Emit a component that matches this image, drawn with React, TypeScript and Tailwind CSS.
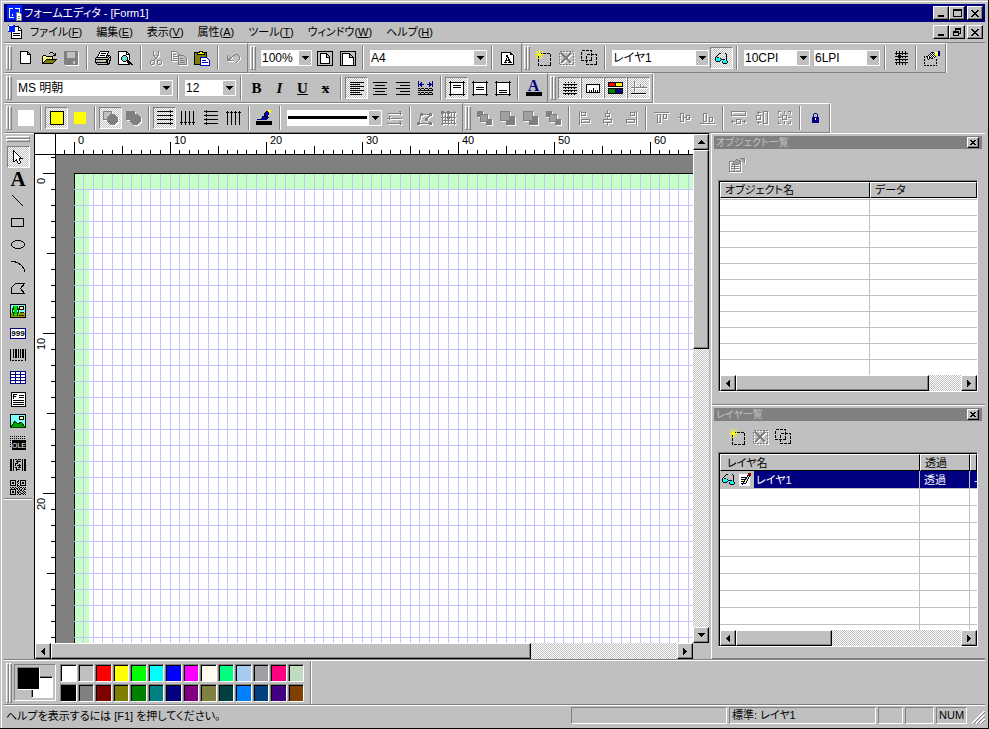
import { ReactNode } from 'react';
import clsx from 'clsx';

const COLORS: Record<string, string> = {
    '#': '#000000',
    g: '#808080',
    s: '#c0c0c0',
    w: '#ffffff',
    y: '#ffff00',
    o: '#808000',
    c: '#00ffff',
    n: '#000080',
};

// Small bitmap: one character per pixel, '.' is transparent
const Px = ({ rows }: { rows: string[] }) => (
    <svg width={rows[0].length} height={rows.length} shapeRendering="crispEdges" className="shrink-0">
        {rows.flatMap((row, y) =>
            row.split('').map((c, x) => COLORS[c] && <rect key={`${x}-${y}`} x={x} y={y} width={1} height={1} fill={COLORS[c]} />)
        )}
    </svg>
);

const Svg = ({ children, off, w = 17, h = 17 }: { children: ReactNode, off?: boolean, w?: number, h?: number }) => (
    <svg
        width={w}
        height={h}
        shapeRendering="crispEdges"
        fill="none"
        stroke={off ? '#808080' : '#000'}
        className={clsx('shrink-0', off && 'drop-shadow-[1px_1px_0_#fff]')}
    >
        {children}
    </svg>
);

const raised = 'border border-t-white border-l-white border-r-black border-b-black bg-[#c0c0c0] shadow-[inset_-1px_-1px_0_#808080]';
const sunken = 'border border-t-[#808080] border-l-[#808080] border-r-white border-b-white';
const dither = 'bg-[repeating-conic-gradient(#fff_0_25%,#c0c0c0_0_50%)] bg-[length:2px_2px]';
const ridge = 'border border-t-white border-l-white border-r-[#808080] border-b-[#808080]';

const Grip = ({ height = 'h-6' }: { height?: string }) => (
    <div className={clsx('mr-[2px] flex shrink-0', height)}>
        <span className={clsx('w-[3px]', ridge)} />
        <span className={clsx('w-[3px]', ridge)} />
    </div>
);

const Band = ({ children }: { children: ReactNode }) => (
    <div className="flex h-[30px] shrink-0 items-center border border-t-white border-l-[#c0c0c0] border-r-[#808080] border-b-[#808080] pl-px pr-[2px] shadow-[1px_0_0_#fff]">
        <Grip />
        {children}
    </div>
);

const Sep = () => (
    <div className="flex h-6 w-2 shrink-0 justify-center">
        <span className="w-[2px] border-l border-l-[#808080] border-r border-r-white" />
    </div>
);

const Tool = ({ label, on, children }: { label: string, on?: boolean, children: ReactNode }) => (
    <button
        type="button"
        aria-label={label}
        className={clsx('flex h-[22px] w-[23px] shrink-0 items-center justify-center', on && sunken, on && dither)}
    >
        {children}
    </button>
);

const Combo = ({ label, value, width, children }: { label: string, value: string, width: string, children?: ReactNode }) => (
    <div className={clsx('relative ml-[3px] mr-px h-4 shrink-0 bg-white', width)}>
        <select
            aria-label={label}
            className="block h-4 w-full appearance-none bg-white pl-px pr-4 text-[12px] leading-4 outline-none"
            defaultValue={value}
        >
            <option value={value}>{value}</option>
        </select>
        {children}
        <span className="pointer-events-none absolute right-px top-px flex h-[14px] w-3 items-center justify-center bg-[#c0c0c0]">
            <Px rows={['#######', '.#####.', '..###..', '...#...']} />
        </span>
    </div>
);

/* ---- icons ---- */

const AppIcon = () => (
    <Svg w={16} h={16}>
        <rect width="15" height="15" fill="#0020ff" stroke="none" />
        <path d="M2.5 12V3.5h3M8 3.5h4.5v3M2 12.5h5M5.5 9v2" stroke="#fff" />
        <path d="M9.5 7.5h3l2 2v6h-5z" fill="#fff" stroke="#808080" />
        <path d="M11 11.5h2M11 13.5h2" stroke="#808080" />
    </Svg>
);

const DocIcon = () => (
    <Svg w={16} h={16}>
        <path d="M4.5 2.5h7l3 3v9h-10z" fill="#fff" />
        <path d="M6 9.5h7M6 11.5h7M11.5 3v3h3" />
        <rect x="1" y="1" width="7" height="7" fill="#0020ff" stroke="none" />
        <path d="M1.5 2v5M2 1.5h4" stroke="#fff" />
    </Svg>
);

const NewIcon = () => (
    <Svg w={12} h={14}><path d="M.5.5h7l3 3v9H.5zM7.5.5v3h3" fill="#fff" /></Svg>
);

const OpenIcon = () => (
    <Px rows={[
        '.........###....',
        '........#...#.#.',
        '.............##.',
        '..###.......###.',
        '.#ywy#######....',
        '.#wywywywyw#....',
        '.#ywywywywy#....',
        '.#wyw###########',
        '.#yw#ooooooooo#.',
        '.#w#ooooooooo#..',
        '.##ooooooooo#...',
        '.###########....',
    ]} />
);

const SaveIcon = () => (
    <Svg off w={15} h={15}>
        <path d="M.5.5h13v13h-12l-1-1z" fill="#808080" />
        <path d="M3 1h8v6H3zM9 10h2v3H9z" fill="#c0c0c0" stroke="none" />
    </Svg>
);

const PrintIcon = () => (
    <Px rows={[
        '.....#########..',
        '....#wwwwwwww#..',
        '....#w#####w#...',
        '...#wwwwwwww#...',
        '...#w#####w####.',
        '..#wwwwwwww#s#s#',
        '.############s##',
        '#ssssssssssss#s#',
        '##############s#',
        '#sssssssyys##s##',
        '#ssssssssss##s#.',
        '#############s#.',
        '.#ssssssssss###.',
        '..############..',
    ]} />
);

const PreviewIcon = () => (
    <Px rows={[
        '#########.......',
        '#wwwwwww##......',
        '#wwwwwww#w#.....',
        '#wwwwwww####....',
        '#wwww###www#....',
        '#www#scs#ww#....',
        '#ww#scscs#w#....',
        '#ww#cscsc#w#....',
        '#ww#scscs#w#....',
        '#www#scs###.....',
        '#wwww###s###....',
        '#wwwwwwww####...',
        '#wwwwwwwww####..',
        '############.##.',
    ]} />
);

const CutIcon = () => (
    <Svg off w={13} h={15}>
        <path d="M3.5 0v4l5 6M8.5 0v4l-5 6" />
        <circle cx="2.5" cy="11.5" r="2" /><circle cx="9.5" cy="11.5" r="2" />
    </Svg>
);

const CopyIcon = () => (
    <Svg off w={17} h={15}>
        <path d="M.5.5h5l3 3v6h-8zM2 3.5h3M2 5.5h5M2 7.5h5" />
        <path d="M7.5 4.5h5l3 3v6h-8z" fill="#c0c0c0" />
        <path d="M9 7.5h3M9 9.5h5M9 11.5h5" />
    </Svg>
);

const PasteIcon = () => (
    <Svg w={17} h={15}>
        <path d="M.5 1.5h12v12H.5z" fill="#808000" />
        <path d="M3.5 3.5v-2h2v-1h3v1h2v2z" fill="#ffff00" />
        <path d="M6.5 6.5h6l3 3v5h-9z" fill="#fff" stroke="#0000c0" />
        <path d="M8 9.5h4M8 11.5h6" stroke="#0000c0" />
    </Svg>
);

const UndoIcon = () => (
    <Px rows={[
        '........ggg...',
        'g.....gg...g..',
        'g....g......g.',
        'g..ggw......gw',
        'g.gg.w......gw',
        'ggg.w.......gw',
        'gggggg.....gw.',
        '.wwwwww...gw..',
        '.........gw...',
    ]} />
);

const PageFit = ({ wide }: { wide?: boolean }) => (
    <Svg w={16} h={15}>
        <path d="M.5.5h15v14H.5z" fill="#c0c0c0" />
        <path d={wide ? 'M2.5 14V2.5h7l4 4V14M9.5 3v3.5h4' : 'M3.5 2.5h6l3 3v7h-9zM9.5 3v3h3'} fill="#fff" />
    </Svg>
);

const PageA = () => (
    <Px rows={[
        '##########...',
        '#wwwwwwww##..',
        '#wwwwwwww###.',
        '#wwww##wwwww#',
        '#wwww##wwwww#',
        '#wwwww##wwww#',
        '#wwww#w#wwww#',
        '#wwww#w##www#',
        '#www#####www#',
        '#www#www##ww#',
        '#ww###w####w#',
        '#wwwwwwwwwww#',
        '#############',
    ]} />
);

const LayerNew = () => (
    <Svg w={17} h={16}>
        <path d="M3.5 3.5h12v12h-12z" strokeDasharray="3 1" />
        <path d="M4.5 0v9M0 4.5h9M1 1l7 7M8 1l-7 7" stroke="#ffff00" />
    </Svg>
);

const LayerDel = () => (
    <Svg off w={16} h={16}>
        <path d="M.5 1.5h14v13H.5z" strokeDasharray="2 1" />
        <path d="M2 3l10 10M12 3L2 13" strokeWidth="2" />
    </Svg>
);

const LayerDup = () => (
    <Svg w={17} h={16}>
        <path d="M.5.5h10v10H.5zM5.5 4.5h10v10h-10z" strokeDasharray="3 1" />
    </Svg>
);

const Glasses = () => (
    <Px rows={[
        '....##....#..',
        '...#.......#.',
        '..#........#.',
        '.#.........#.',
        '#.##.......#.',
        '#cccc#.....#.',
        '#ccccc####.#.',
        '#cccc#..ccc#.',
        '.####..#cccc#',
        '.......#cccc#',
        '........####.',
    ]} />
);

const GridIcon = () => (
    <Px rows={[
        '..#..#..#..#..',
        '..............',
        '##############',
        '..#..#..#..#..',
        '..............',
        '##############',
        '..#..#..#..#..',
        '..............',
        '##############',
        '..#..#..#..#..',
        '..............',
        '##############',
        '..#..#..#..#..',
    ]} />
);

const GridPointIcon = () => (
    <Px rows={[
        '..#..#..#..#..',
        '..#..#..#..#..',
        '.#############',
        '..#..#..#..#..',
        '....###.......',
        '.#############',
        '....###.#..#..',
        '.....#........',
        '.#############',
        '..#..#..#..#..',
        '.....#........',
        '.#############',
        '..#..#..#..#..',
        '..#..#..#..#..',
    ]} />
);

const PropIcon = () => (
    <Px rows={[
        '..............nn',
        '.......###wwwynn',
        '......#w#w#wyynn',
        '.....#w#w#wyyynn',
        '....#w#w#w#yy.nn',
        '#.##w#w#w#w#....',
        '#..#w##w#w#.....',
        '...#w#.##.......',
        '#...#.......#...',
        '#...........#...',
        '................',
        '#...........#...',
        '#...........#...',
        '................',
        '##.##.##.##.#...',
    ]} />
);

const Letter = ({ children, className }: { children: string, className?: string }) => (
    <span className={clsx("font-['Liberation_Serif',serif] text-[15px] leading-4 font-bold", className)}>{children}</span>
);

const ALIGN = {
    left: 'M0 .5h14M0 2.5h10M0 4.5h14M0 6.5h10M0 8.5h14M0 10.5h10M0 12.5h12',
    center: 'M0 .5h14M2 3.5h10M0 6.5h14M2 9.5h10M0 12.5h14',
    right: 'M0 .5h14M4 3.5h10M0 6.5h14M4 9.5h10M0 12.5h14',
};

const AlignIcon = ({ to }: { to: keyof typeof ALIGN }) => (
    <Svg w={14} h={13}><path d={ALIGN[to]} /></Svg>
);

const SpreadIcon = () => (
    <Px rows={[
        'n.............n',
        'n..n.......n..n',
        'n.nn.......nn.n',
        'nnnnnn...nnnnnn',
        'n.nn.......nn.n',
        'n..n.......n..n',
        '...............',
        '##.###.###.###.',
        '..#...#...#...#',
        '###############',
        '...............',
        '##.###.###.###.',
        '..#...#...#...#',
        '###############',
    ]} />
);

const VAlign = ({ d }: { d: string }) => (
    <Svg w={16} h={15}>
        <path d="M2 2h12v12H2z" fill="#fff" stroke="none" />
        <path d="M0 1.5h16M0 13.5h16M1.5 0v15M14.5 0v15" />
        <path d={d} />
    </Svg>
);

const FontColor = () => (
    <span className="flex w-4 flex-col items-center border-b-4 border-black font-['Liberation_Serif',serif] text-[16px] leading-3 font-bold text-[#000080]">A</span>
);

const RulerIcon = () => (
    <Svg w={14} h={9}>
        <path d="M.5.5h13v8H.5z" fill="#fff" />
        <path d="M3.5 6v2M5.5 6v2M7.5 4v4M9.5 6v2M11.5 6v2" />
    </Svg>
);

const PaletteIcon = () => (
    <Svg w={15} h={12}>
        <path d="M0 0h15v12H0z" fill="#000" stroke="none" />
        <path d="M0 5h15v1H0z" fill="#fff" stroke="none" />
        <path d="M1 1h6v3H1z" fill="#ff0000" stroke="none" />
        <path d="M8 1h6v3H8z" fill="#ffff00" stroke="none" />
        <path d="M1 7h6v4H1z" fill="#008000" stroke="none" />
        <path d="M8 7h6v4H8z" fill="#000080" stroke="none" />
    </Svg>
);

const GuideIcon = () => (
    <Svg off w={16} h={14}>
        <path d="M3.5 0v11M0 6.5h16M9.5 3v4M12.5 5v2" />
        <path d="M0 12.5h15" stroke="#000" />
    </Svg>
);

const ShapePair = ({ back }: { back?: boolean }) => (
    <Svg off w={16} h={15}>
        <path d="M.5.5h8v8h-8z" fill={back ? '#808080' : '#c0c0c0'} />
        <circle cx="9.5" cy="8.5" r="5" fill="#808080" />
    </Svg>
);

const LinesIcon = ({ d }: { d: string }) => <Svg w={16} h={16}><path d={d} /></Svg>;

const BrushIcon = () => (
    <Svg w={17} h={16}>
        <path d="M0 11h16v4H0z" fill="#000" stroke="none" />
        <path d="M1 9.5h4l2-3 5 1-2 2H5" fill="#000080" stroke="#000080" />
        <path d="M8 5l3-4h3l-3 6z" fill="#0000ff" />
        <path d="M12 0h3v3h-2z" fill="#ffff00" stroke="none" />
    </Svg>
);

const ArrowsIcon = () => (
    <Svg off w={16} h={15}><path d="M1 2.5h14M12.5 0l2 2.5-2 2M0 7.5h15M3.5 5l-2 2.5 2 2M0 12.5h15M12.5 10l2 2.5-2 2" /></Svg>
);

const NodeIcon = () => (
    <Svg off w={17} h={15}>
        <path d="M1.5 12.5l3-9h9l-4 5 4 4z" />
        <path d="M0 11h3v3H0zM3 2h3v3H3zM12 2h3v3h-3zM12 11h3v3h-3zM8 7h3v3H8z" fill="#808080" stroke="none" />
    </Svg>
);

const MeshIcon = () => (
    <Svg off w={16} h={15}>
        <path d="M1.5 0v14M7.5 0v14M13.5 0v14M0 1.5h15M0 6.5h15M0 12.5h15M4.5 2v11M10.5 2v11M1 9.5h13" />
        <path d="M0 0h3v3H0zM6 0h3v3H6zM6 5h3v3H6z" fill="#808080" stroke="none" />
    </Svg>
);

const StackIcon = ({ d, top }: { d: string, top: string }) => (
    <Svg off w={16} h={15}>
        <path d={d} fill="#808080" />
        <path d={top} fill="#a0a0a0" />
    </Svg>
);

const OffIcon = ({ d }: { d: string }) => <Svg off w={16} h={16}><path d={d} /></Svg>;

const LockIcon = () => (
    <Px rows={['..nnn..', '.n...n.', '.n...n.', '.n...n.', 'nnnnnnn', 'nnnwnnn', 'nnnwnnn', 'nnnnnnn', 'nnnnnnn', 'nnnnnnn']} />
);

const CursorIcon = () => (
    <Px rows={[
        '#..........',
        '##.........',
        '#w#........',
        '#ww#.......',
        '#www#......',
        '#wwww#.....',
        '#wwwww#....',
        '#wwwwww#...',
        '#wwwww####.',
        '#ww#ww#....',
        '#w##ww#....',
        '##..#ww#...',
        '....#ww#...',
        '.....##....',
    ]} />
);

const Scenery = ({ cactus }: { cactus?: boolean }) => (
    <Svg w={16} h={14}>
        <path d="M.5.5h15v13H.5z" fill="#80ffff" />
        <circle cx="11.5" cy="4" r="2" fill="#ffff80" />
        {cactus ? (
            <>
                <path d="M1 9h14v4H1z" fill="#a09000" stroke="none" />
                <path d="M4 2h3v10H4z" fill="#00e000" stroke="none" />
                <path d="M2.5 4v4h2M8.5 4v4h-2M3.5 2v4M7.5 2v4M3.5 9v3M7.5 9v3M10 8.5h4M9 11.5h5" stroke="#004000" />
            </>
        ) : (
            <path d="M1 13l4-6 3 3 3-2 4 5z" fill="#00a000" stroke="#004000" />
        )}
    </Svg>
);

const BarcodeIcon = () => (
    <Svg w={16} h={13}>
        <path d="M.5 0v12M3.5 0v9M8.5 0v9M15.5 0v12" />
        <path d="M5 0h2v9H5zM10 0h1v9h-1zM12 0h2v9h-2z" fill="#000" stroke="none" />
        <path d="M2 11.5h12" strokeDasharray="2 1" />
    </Svg>
);

const TableIcon = () => (
    <Svg w={16} h={13}>
        <path d="M.5.5h15v12H.5zM0 3.5h16M0 6.5h16M0 9.5h16M5.5 0v13M10.5 0v13" fill="#fff" stroke="#000080" />
    </Svg>
);

const TextFrameIcon = () => (
    <Svg w={15} h={15}>
        <path d="M.5.5h14v14H.5z" fill="#fff" />
        <path d="M2.5 2v5M2 2.5h4M2 4.5h3M8 3.5h5M8 5.5h5M2 8.5h11M2 10.5h11M2 12.5h11" />
    </Svg>
);

const Pdf417Icon = () => (
    <Svg w={16} h={12}>
        <path d="M0 0h2v12H0zM3 0h1v12H3zM12 0h1v12h-1zM14 0h2v12h-2z" fill="#000" stroke="none" />
        <path d="M5 .5h2M8 .5h3M6 2.5h5M5 4.5h3M7 6.5h4M5 8.5h2M8 8.5h3M6 10.5h4M7.5 1v3M9.5 5v4M5.5 5v2M6.5 9v3" />
    </Svg>
);

const QrIcon = () => (
    <Px rows={[
        '######..#.######',
        '#....#.##.#....#',
        '#.##.#.#..#.##.#',
        '#.##.#..#.#.##.#',
        '#....#.#..#....#',
        '######.##.######',
        '.......#.#......',
        '#.##.#..#.##.#.#',
        '.#..#.##.#..#.#.',
        '######.#.#.#..##',
        '#....#..#.##.#..',
        '#.##.#.#.#..#.#.',
        '#.##.#.##.#..#.#',
        '#....#..#..##.#.',
        '######.#.##..#.#',
    ]} />
);

const OleIcon = () => (
    <Svg w={16} h={15}>
        <path d="M0 .5h16M0 2.5h16M.5 4v8" strokeDasharray="1 1" />
        <rect x="2" y="4" width="14" height="10" fill="#000" stroke="none" />
        <text x="2" y="12" fill="#fff" stroke="none" fontFamily="Liberation Sans, sans-serif" fontSize="7">OLE</text>
    </Svg>
);

const NumIcon = () => (
    <span className="flex w-4 justify-center border border-[#000080] bg-white font-['Liberation_Sans',sans-serif] text-[8px] leading-[9px] font-bold">999</span>
);

/* ---- window chrome ---- */

const WinButton = ({ label, rows, className }: { label: string, rows: string[], className?: string }) => (
    <button type="button" aria-label={label} className={clsx('flex h-[14px] w-4 shrink-0 items-center justify-center', raised, className)}>
        <Px rows={rows} />
    </button>
);

const MIN = ['.......', '.......', '.......', '.......', '.......', '.......', '######.', '######.'];
const MAX = ['#########', '#########', '#.......#', '#.......#', '#.......#', '#.......#', '#.......#', '#########'];
const RESTORE = ['..######', '..######', '..#....#', '######.#', '######.#', '#....###', '#....#..', '######..'];
const CLOSE = ['##....##', '.##..##.', '..####..', '...##...', '..####..', '.##..##.', '##....##'];

const MENU = [
    ['ファイル', 'F'],
    ['編集', 'E'],
    ['表示', 'V'],
    ['属性', 'A'],
    ['ツール', 'T'],
    ['ウィンドウ', 'W'],
    ['ヘルプ', 'H'],
];

const ARROWS = {
    up: ['...#...', '..###..', '.#####.', '#######'],
    down: ['#######', '.#####.', '..###..', '...#...'],
    left: ['...#', '..##', '.###', '####', '.###', '..##', '...#'],
    right: ['#...', '##..', '###.', '####', '###.', '##..', '#...'],
};

const ArrowButton = ({ dir }: { dir: keyof typeof ARROWS }) => (
    <button type="button" aria-label={dir} className={clsx('flex size-4 shrink-0 items-center justify-center', raised)}>
        <Px rows={ARROWS[dir]} />
    </button>
);

const HScroll = ({ thumb }: { thumb: string }) => (
    <div className={clsx('flex h-4 shrink-0', dither)}>
        <ArrowButton dir="left" />
        <div className={clsx('h-4', raised, thumb)} />
        <div className="grow" />
        <ArrowButton dir="right" />
    </div>
);

/* ---- canvas ---- */

const CPI = 96 / 10;
const LPI = 96 / 6;
const tickLength = (i: number) => (i % 10 === 0 ? 12 : i % 5 === 0 ? 8 : 4);

const TopRuler = () => (
    <svg className="h-5 min-w-0 grow bg-white" shapeRendering="crispEdges" fontFamily="Liberation Sans, sans-serif" fontSize="11">
        {Array.from({ length: 200 }, (_, n) => n - 1).map(i => (
            <rect key={i} x={18 + Math.floor(i * CPI)} y={20 - tickLength(i)} width="1" height={tickLength(i)} />
        ))}
        {[0, 10, 20, 30, 40, 50, 60].map(i => (
            <text key={i} x={22 + i * CPI} y="10">{i}</text>
        ))}
    </svg>
);

const SideRuler = () => (
    <svg className="h-full w-5 shrink-0 bg-white" shapeRendering="crispEdges" fontFamily="Liberation Sans, sans-serif" fontSize="11">
        {Array.from({ length: 120 }, (_, n) => n - 1).map(i => (
            <rect key={i} x={20 - tickLength(i)} y={18 + i * LPI} width={tickLength(i)} height="1" />
        ))}
        {[0, 10, 20].map(i => (
            <text key={i} transform={`translate(10 ${18 + i * LPI + (i ? 17 : 11)}) rotate(-90)`}>{i}</text>
        ))}
    </svg>
);

const Paper = () => (
    <svg className="h-full min-w-0 grow border-l border-black bg-[#808080]" shapeRendering="crispEdges">
        <rect x="18" y="18" width="2000" height="2000" />
        <rect x="19" y="19" width="2000" height="2000" fill="#c6ffc6" />
        <rect x="33" y="34" width="2000" height="2000" fill="#fff" />
        {Array.from({ length: 200 }, (_, i) => (
            <rect key={i} x={18 + Math.floor((i + 1) * CPI)} y="19" width="1" height="2000" fill="#c3c3ff" />
        ))}
        {Array.from({ length: 120 }, (_, i) => (
            <rect key={i} x="18" y={18 + (i + 1) * LPI} width="2000" height="1" fill="#c3c3ff" />
        ))}
    </svg>
);

const Canvas = () => (
    <div className="flex min-w-0 grow border-l border-t border-black">
        <div className="flex min-w-0 grow flex-col">
            <div className="flex h-[21px] shrink-0 border-b border-black">
                <div className="w-[21px] shrink-0 border-r border-black bg-white" />
                <TopRuler />
            </div>
            <div className="flex min-h-0 grow">
                <SideRuler />
                <Paper />
            </div>
            <HScroll thumb="w-[73%]" />
        </div>
        <div className={clsx('mb-4 flex w-4 shrink-0 flex-col', dither)}>
            <ArrowButton dir="up" />
            <div className={clsx('h-[39%] w-4', raised)} />
            <div className="grow" />
            <ArrowButton dir="down" />
        </div>
    </div>
);

/* ---- side panels ---- */

const Panel = ({ title, className, children }: { title: string, className: string, children: ReactNode }) => (
    <section className={clsx('flex flex-col border-b border-b-[#808080] border-t border-t-white pt-[2px] pl-[2px] pr-[3px]', className)}>
        <header className="flex h-[13px] shrink-0 items-center justify-between bg-[#808080] pl-[2px] pr-[3px]">
            <h2 className="text-[10px] leading-[13px] text-[#c0c0c0]">{title}</h2>
            <button type="button" aria-label="閉じる" className={clsx('flex h-[11px] w-3 items-center justify-center', raised)}>
                <Px rows={['##..##', '.####.', '..##..', '.####.', '##..##']} />
            </button>
        </header>
        {children}
    </section>
);

const th = 'overflow-hidden border border-t-white border-l-white border-r-black border-b-black bg-[#c0c0c0] p-0 text-left text-[11px] leading-[14px] font-normal whitespace-nowrap';

const ListBox = ({ thumb, children }: { thumb: string, children: ReactNode }) => (
    <div className={clsx('mx-1 flex min-h-0 grow flex-col', sunken)}>
        <div className="flex min-h-0 grow flex-col border-l border-t border-black">
            <div className="min-h-0 grow overflow-hidden bg-white">{children}</div>
            <HScroll thumb={thumb} />
        </div>
    </div>
);

const ObjectPanel = () => (
    <Panel title="オブジェクト一覧" className="h-[272px] shrink-0 pb-3">
        <div className="flex h-[31px] shrink-0 items-center pl-3">
            <Tool label="プロパティ">
                <Svg off w={18} h={16}>
                    <path d="M.5 4.5h11v10H.5zM2 9.5h8M2 11.5h8M5.5 8v6" />
                    <path d="M3 7l5-5 4 3-3 3zM11 1.5h4v4" fill="#a0a0a0" />
                </Svg>
            </Tool>
        </div>
        <ListBox thumb="w-[193px]">
            <table className="w-full table-fixed border-separate border-spacing-0">
                <thead>
                    <tr>
                        <th className={clsx(th, 'h-4 w-[150px] pl-1')}>オブジェクト名</th>
                        <th className={clsx(th, 'h-4 pl-1')}>データ</th>
                    </tr>
                </thead>
                <tbody>
                    <tr><td className="h-[2px] border-b border-r border-[#c0c0c0] p-0" /><td className="border-b border-[#c0c0c0] p-0" /></tr>
                    {Array.from({ length: 12 }, (_, i) => (
                        <tr key={i}>
                            <td className="h-4 border-b border-r border-[#c0c0c0] p-0" />
                            <td className="h-4 border-b border-[#c0c0c0] p-0" />
                        </tr>
                    ))}
                </tbody>
            </table>
        </ListBox>
    </Panel>
);

const LayerPanel = () => (
    <Panel title="レイヤ一覧" className="min-h-0 grow pb-[11px]">
        <div className="flex h-[31px] shrink-0 items-center pl-3">
            <Tool label="新規レイヤ"><LayerNew /></Tool>
            <Tool label="レイヤ削除"><LayerDel /></Tool>
            <Tool label="レイヤ複製"><LayerDup /></Tool>
        </div>
        <ListBox thumb="w-[96px]">
            <table className="w-full table-fixed border-separate border-spacing-0">
                <thead>
                    <tr>
                        <th className={clsx(th, 'h-[17px] w-[200px] pl-[6px]')}>レイヤ名</th>
                        <th className={clsx(th, 'h-[17px] w-[50px] pl-1')}>透過</th>
                        <th className={clsx(th, 'h-[17px] pl-1')}>ク</th>
                    </tr>
                </thead>
                <tbody>
                    <tr className="bg-[#000080] text-[11px] leading-4 text-white">
                        <td className="h-[18px] border-b border-r border-[#c0c0c0] p-0">
                            <div className="flex h-[17px] items-center">
                                <span className="flex h-[17px] w-4 items-center justify-center bg-[#c0c0c0]"><Glasses /></span>
                                <span className="flex h-[17px] w-[18px] items-center justify-center bg-[#c0c0c0]">
                                    <Svg w={14} h={14}>
                                        <path d="M1 1h11v12H1z" fill="#fff" stroke="none" />
                                        <path d="M3 4.5h5M3 6.5h6M3 8.5h6M3 10.5h5" />
                                        <path d="M5 11l5-9h2l-4 8z" fill="#ffff00" stroke="#000080" />
                                        <path d="M10 0h3v3h-3z" fill="#800000" stroke="none" />
                                    </Svg>
                                </span>
                                <span className="pl-[2px]">レイヤ1</span>
                            </div>
                        </td>
                        <td className="border-b border-r border-[#c0c0c0] p-0 pl-1">透過</td>
                        <td className="border-b border-[#c0c0c0] p-0 pl-1">-</td>
                    </tr>
                    {Array.from({ length: 9 }, (_, i) => (
                        <tr key={i}>
                            <td className="h-[17px] border-b border-r border-[#c0c0c0] p-0" />
                            <td className="h-[17px] border-b border-r border-[#c0c0c0] p-0" />
                            <td className="h-[17px] border-b border-[#c0c0c0] p-0" />
                        </tr>
                    ))}
                </tbody>
            </table>
        </ListBox>
    </Panel>
);

const TOOLS: { label: string, icon: ReactNode }[] = [
    { label: '選択', icon: <CursorIcon /> },
    { label: '文字', icon: <span className="font-['Liberation_Serif',serif] text-[21px] leading-5 font-bold">A</span> },
    { label: '直線', icon: <Svg w={12} h={12}><path d="M0 0l11 11" /></Svg> },
    { label: '矩形', icon: <Svg w={14} h={10}><path d="M.5.5h12v8H.5z" /></Svg> },
    { label: '楕円', icon: <Svg w={15} h={10}><ellipse cx="7" cy="4.5" rx="6.5" ry="4" /></Svg> },
    { label: '円弧', icon: <Svg w={15} h={12}><path d="M0 .5h3c5 1 9 4 11 10" /></Svg> },
    { label: '多角形', icon: <Svg w={15} h={12}><path d="M.5 10.5v-6l4-4h9l-4 5 4 5z" /></Svg> },
    { label: 'イメージ', icon: <Scenery cactus /> },
    { label: '数値', icon: <NumIcon /> },
    { label: 'バーコード', icon: <BarcodeIcon /> },
    { label: '表', icon: <TableIcon /> },
    { label: 'テキスト枠', icon: <TextFrameIcon /> },
    { label: '画像', icon: <Scenery /> },
    { label: 'OLE', icon: <OleIcon /> },
    { label: 'PDF417', icon: <Pdf417Icon /> },
    { label: 'QRコード', icon: <QrIcon /> },
];

const SWATCHES = [
    'bg-[#ffffff]', 'bg-[#c0c0c0]', 'bg-[#ff0000]', 'bg-[#ffff00]', 'bg-[#00ff00]', 'bg-[#00ffff]', 'bg-[#0000ff]',
    'bg-[#ff00ff]', 'bg-[#fffbf0]', 'bg-[#00ff80]', 'bg-[#a6caf0]', 'bg-[#a0a0a4]', 'bg-[#ff0080]', 'bg-[#c0dcc0]',
    'bg-[#000000]', 'bg-[#808080]', 'bg-[#800000]', 'bg-[#808000]', 'bg-[#008000]', 'bg-[#008080]', 'bg-[#000080]',
    'bg-[#800080]', 'bg-[#808040]', 'bg-[#004040]', 'bg-[#0080ff]', 'bg-[#004080]', 'bg-[#400080]', 'bg-[#804000]',
];

const Pane = ({ width, children }: { width: string, children?: ReactNode }) => (
    <div className={clsx('h-[17px] shrink-0 pl-[2px] leading-[15px] whitespace-nowrap', sunken, width)}>{children}</div>
);

const App = () => {
    return (
        <div className="flex h-screen flex-col border-r border-b border-black bg-[#c0c0c0] font-['Liberation_Sans','Noto_Sans_CJK_JP',sans-serif] text-[11px] text-black [font-feature-settings:'palt'] select-none">
            <div className="mt-px ml-px flex min-h-0 grow flex-col border-t border-l border-white pt-[2px] pr-[3px] pb-[3px] pl-[2px]">
                <header className="flex h-[18px] shrink-0 items-center bg-[#000080] pl-[3px] pr-[2px] text-white">
                    <AppIcon />
                    <h1 className="grow pl-px leading-[18px]">フォームエディタ - [Form1]</h1>
                    <WinButton label="最小化" rows={MIN} />
                    <WinButton label="最大化" rows={MAX} />
                    <WinButton label="閉じる" rows={CLOSE} className="ml-[2px]" />
                </header>
                <nav className="flex h-5 shrink-0 items-center pl-[3px] pr-[2px]">
                    <DocIcon />
                    <div className="flex grow gap-[14px] pl-[7px] leading-[18px] whitespace-nowrap">
                        {MENU.map(([name, key]) => (
                            <button key={key} type="button">{name}(<u>{key}</u>)</button>
                        ))}
                    </div>
                    <WinButton label="最小化" rows={MIN} />
                    <WinButton label="元に戻す" rows={RESTORE} />
                    <WinButton label="閉じる" rows={CLOSE} className="ml-[2px]" />
                </nav>

                <div className="shrink-0 border-t border-t-[#808080]">
                    <div className="flex">
                        <Band>
                            <Tool label="新規作成"><NewIcon /></Tool>
                            <Tool label="開く"><OpenIcon /></Tool>
                            <Tool label="保存"><SaveIcon /></Tool>
                            <Sep />
                            <Tool label="印刷"><PrintIcon /></Tool>
                            <Tool label="プレビュー"><PreviewIcon /></Tool>
                            <Sep />
                            <Tool label="切り取り"><CutIcon /></Tool>
                            <Tool label="コピー"><CopyIcon /></Tool>
                            <Tool label="貼り付け"><PasteIcon /></Tool>
                            <Sep />
                            <Tool label="元に戻す"><UndoIcon /></Tool>
                        </Band>
                        <Band>
                            <Combo label="倍率" value="100%" width="w-[51px]" />
                            <Tool label="全体表示"><PageFit /></Tool>
                            <Tool label="幅に合わせる"><PageFit wide /></Tool>
                            <Sep />
                            <Combo label="用紙" value="A4" width="w-[117px]" />
                            <Sep />
                            <Tool label="用紙設定"><PageA /></Tool>
                        </Band>
                        <Band>
                            <Tool label="新規レイヤ"><LayerNew /></Tool>
                            <Tool label="レイヤ削除"><LayerDel /></Tool>
                            <Tool label="レイヤ複製"><LayerDup /></Tool>
                            <Sep />
                            <Combo label="レイヤ" value="レイヤ1" width="w-[97px]" />
                            <Tool label="レイヤ表示" on><Glasses /></Tool>
                            <Sep />
                            <Combo label="文字ピッチ" value="10CPI" width="w-[66px]" />
                            <Combo label="行ピッチ" value="6LPI" width="w-[66px]" />
                            <Sep />
                            <Tool label="グリッド設定"><GridPointIcon /></Tool>
                            <Sep />
                            <Tool label="プロパティ"><PropIcon /></Tool>
                        </Band>
                    </div>
                    <div className="flex">
                        <Band>
                            <Combo label="フォント" value="MS 明朝" width="w-[156px]" />
                            <Sep />
                            <Combo label="サイズ" value="12" width="w-[51px]" />
                            <Sep />
                            <Tool label="太字"><Letter>B</Letter></Tool>
                            <Tool label="斜体"><Letter className="italic">I</Letter></Tool>
                            <Tool label="下線"><Letter className="underline">U</Letter></Tool>
                            <Tool label="取り消し線"><Letter className="line-through">x</Letter></Tool>
                            <Sep />
                            <Tool label="左揃え" on><AlignIcon to="left" /></Tool>
                            <Tool label="中央揃え"><AlignIcon to="center" /></Tool>
                            <Tool label="右揃え"><AlignIcon to="right" /></Tool>
                            <Tool label="均等割り付け"><SpreadIcon /></Tool>
                            <Sep />
                            <Tool label="上揃え" on><VAlign d="M4 4.5h8M4 6.5h8" /></Tool>
                            <Tool label="上下中央"><VAlign d="M4 6.5h8M4 8.5h8" /></Tool>
                            <Tool label="下揃え"><VAlign d="M4 9.5h8M4 11.5h8" /></Tool>
                            <Sep />
                            <Tool label="文字色"><FontColor /></Tool>
                        </Band>
                        <Band>
                            <Tool label="グリッド" on><GridIcon /></Tool>
                            <Tool label="ルーラー" on><RulerIcon /></Tool>
                            <Tool label="カラーパレット" on><PaletteIcon /></Tool>
                            <Tool label="ガイド" on><GuideIcon /></Tool>
                        </Band>
                    </div>
                    <div className="flex">
                        <Band>
                            <Tool label="背景色"><span className="size-4 bg-white" /></Tool>
                            <Sep />
                            <Tool label="枠あり" on><span className="size-[14px] border border-black bg-[#ffff00]" /></Tool>
                            <Tool label="枠なし"><span className="size-3 bg-[#ffff00]" /></Tool>
                            <Sep />
                            <Tool label="透過" on><ShapePair /></Tool>
                            <Tool label="不透過"><ShapePair back /></Tool>
                            <Sep />
                            <Tool label="横書き" on><LinesIcon d="M0 1.5h16M0 5.5h16M0 9.5h16M0 13.5h16M13.5 0v3M13.5 4v3M13.5 8v3M13.5 12v3" /></Tool>
                            <Tool label="縦書き"><LinesIcon d="M1.5 1v14M5.5 1v14M9.5 1v14M13.5 1v14M0 12.5h3M4 12.5h3M8 12.5h3M12 12.5h3" /></Tool>
                            <Tool label="横書き 逆"><LinesIcon d="M1 1.5h14M1 5.5h14M1 9.5h14M1 13.5h14M3.5 0v3M3.5 4v3M3.5 8v3M3.5 12v3" /></Tool>
                            <Tool label="縦書き 逆"><LinesIcon d="M1.5 1v14M5.5 1v14M9.5 1v14M13.5 1v14M0 2.5h3M4 2.5h3M8 2.5h3M12 2.5h3" /></Tool>
                            <Sep />
                            <Tool label="線色"><BrushIcon /></Tool>
                            <Sep />
                            <Combo label="線種" value="" width="w-[95px]">
                                <span className="pointer-events-none absolute top-[6px] left-px h-[3px] w-[79px] bg-black" />
                            </Combo>
                            <Tool label="矢印"><ArrowsIcon /></Tool>
                            <Sep />
                            <Tool label="頂点編集"><NodeIcon /></Tool>
                            <Tool label="表編集"><MeshIcon /></Tool>
                        </Band>
                        <Band>
                            <Tool label="最前面"><StackIcon d="M.5.5h5v5h-5zM9.5 8.5h5v5h-5z" top="M3.5 3.5h7v7h-7z" /></Tool>
                            <Tool label="前面"><StackIcon d="M6.5 5.5h8v8h-8z" top="M.5.5h9v9h-9z" /></Tool>
                            <Tool label="背面"><StackIcon top="M.5.5h9v9h-9z" d="M6.5 5.5h8v8h-8z" /></Tool>
                            <Tool label="最背面"><StackIcon top="M3.5 3.5h7v7h-7z" d="M.5.5h5v5h-5zM9.5 8.5h5v5h-5z" /></Tool>
                            <Sep />
                            <Tool label="左に整列"><OffIcon d="M2.5 1v14M4.5 2.5h4v3h-4zM4.5 9.5h8v3h-8z" /></Tool>
                            <Tool label="中央に整列"><OffIcon d="M7.5 0v3M7.5 6v3M7.5 12v3M5.5 3.5h4v3h-4zM3.5 9.5h8v3h-8z" /></Tool>
                            <Tool label="右に整列"><OffIcon d="M13.5 1v14M7.5 2.5h4v3h-4zM3.5 9.5h8v3h-8z" /></Tool>
                            <Sep />
                            <Tool label="上に整列"><OffIcon d="M0 2.5h15M3.5 4.5h3v8h-3zM9.5 4.5h3v4h-3z" /></Tool>
                            <Tool label="上下中央に整列"><OffIcon d="M1 7.5h2M6 7.5h3M12 7.5h2M3.5 3.5h3v8h-3zM9.5 5.5h3v4h-3z" /></Tool>
                            <Tool label="下に整列"><OffIcon d="M0 13.5h15M3.5 3.5h3v8h-3zM9.5 7.5h3v4h-3z" /></Tool>
                            <Sep />
                            <Tool label="幅を揃える"><OffIcon d="M.5 1.5h14v4H.5zM5.5 9.5h4v4h-4zM0 11.5h4M11 11.5h4M1.5 10v3M13.5 10v3" /></Tool>
                            <Tool label="高さを揃える"><OffIcon d="M9.5 1.5h4v12h-4zM2.5 5.5h4v4h-4zM4.5 1v3M4.5 11v3M3 2.5h4M3 12.5h4" /></Tool>
                            <Tool label="サイズを揃える"><OffIcon d="M5.5 5.5h4v4h-4zM7.5 1v3M7.5 11v3M1 7.5h3M11 7.5h3M1.5 4V1.5H4M11 1.5h2.5V4M1.5 11v2.5H4M11 13.5h2.5V11" /></Tool>
                            <Sep />
                            <Tool label="ロック"><LockIcon /></Tool>
                        </Band>
                    </div>
                </div>

                <main className="flex min-h-0 grow border-b border-b-[#808080]">
                    <aside className="flex w-[30px] shrink-0 flex-col items-center border-t border-t-white pr-[2px]">
                        <div className="mt-[2px] mb-1 flex w-6 flex-col">
                            <span className={clsx('h-[3px]', ridge)} />
                            <span className={clsx('h-[3px]', ridge)} />
                        </div>
                        {TOOLS.map((tool, i) => (
                            <Tool key={tool.label} label={tool.label} on={i === 0}>{tool.icon}</Tool>
                        ))}
                        <div className="h-[2px] w-full border-t border-b border-t-[#808080] border-b-white" />
                    </aside>
                    <Canvas />
                    <div className="ml-[2px] flex w-[274px] shrink-0 flex-col border-l border-l-white">
                        <ObjectPanel />
                        <LayerPanel />
                    </div>
                </main>

                <div className="flex h-[45px] shrink-0 border-t border-b border-t-white border-b-[#808080]">
                    <div className="flex items-center border-r border-r-[#808080] pr-[5px] pl-[2px] shadow-[1px_0_0_#fff]">
                        <Grip height="h-10" />
                        <div className={clsx('relative mr-1 h-[37px] w-[42px]', sunken)}>
                            <span className="absolute right-[2px] bottom-[2px] size-[22px] border border-white border-t-[#808080] border-l-[#808080] bg-white shadow-[inset_1px_1px_0_#000]" />
                            <span className="absolute top-[2px] left-[2px] size-[23px] border border-white border-t-[#808080] border-l-[#808080] bg-black" />
                        </div>
                        <div className="grid w-[245px] grid-cols-14 gap-y-[2px]">
                            {SWATCHES.map(color => (
                                <button
                                    key={color}
                                    type="button"
                                    aria-label={color.slice(4, 11)}
                                    className={clsx('mr-px h-[18px] shadow-[inset_1px_1px_0_#000]', sunken, color)}
                                />
                            ))}
                        </div>
                    </div>
                </div>

                <footer className="flex h-5 shrink-0 items-center gap-[2px] border-t border-t-white">
                    <p className="grow pl-[2px] leading-[18px]">ヘルプを表示するには [F1] を押してください。</p>
                    <Pane width="w-[156px]" />
                    <Pane width="w-[147px]">標準: レイヤ1</Pane>
                    <Pane width="w-[25px]" />
                    <Pane width="w-[29px]" />
                    <Pane width="w-[31px]">NUM</Pane>
                    <Svg w={16} h={16}>
                        <path d="M4 15.5L15.5 4M8 15.5L15.5 8M12 15.5l3.5-3.5" stroke="#808080" strokeWidth="2" />
                        <path d="M3 15.5L15.5 3M7 15.5L15.5 7M11 15.5l4.5-4.5" stroke="#fff" />
                    </Svg>
                </footer>
            </div>
        </div>
    );
};

export default App;
